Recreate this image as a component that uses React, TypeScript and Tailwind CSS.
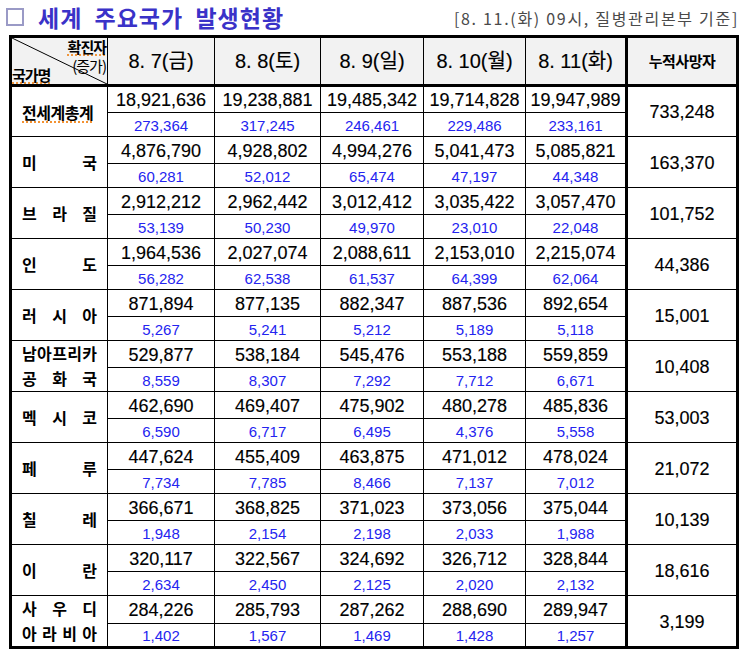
import React from 'react';

interface CountryRow {
  label: string[][];
  total: string[];
  inc: string[];
  death: string;
  underline?: boolean;
}

const dates = [
  { d: '8. 7', w: '금' },
  { d: '8. 8', w: '토' },
  { d: '8. 9', w: '일' },
  { d: '8. 10', w: '월' },
  { d: '8. 11', w: '화' },
];

const rows: CountryRow[] = [
  {
    label: [['전', '세', '계', '총', '계']],
    underline: true,
    total: ['18,921,636', '19,238,881', '19,485,342', '19,714,828', '19,947,989'],
    inc: ['273,364', '317,245', '246,461', '229,486', '233,161'],
    death: '733,248',
  },
  {
    label: [['미', '국']],
    total: ['4,876,790', '4,928,802', '4,994,276', '5,041,473', '5,085,821'],
    inc: ['60,281', '52,012', '65,474', '47,197', '44,348'],
    death: '163,370',
  },
  {
    label: [['브', '라', '질']],
    total: ['2,912,212', '2,962,442', '3,012,412', '3,035,422', '3,057,470'],
    inc: ['53,139', '50,230', '49,970', '23,010', '22,048'],
    death: '101,752',
  },
  {
    label: [['인', '도']],
    total: ['1,964,536', '2,027,074', '2,088,611', '2,153,010', '2,215,074'],
    inc: ['56,282', '62,538', '61,537', '64,399', '62,064'],
    death: '44,386',
  },
  {
    label: [['러', '시', '아']],
    total: ['871,894', '877,135', '882,347', '887,536', '892,654'],
    inc: ['5,267', '5,241', '5,212', '5,189', '5,118'],
    death: '15,001',
  },
  {
    label: [['남', '아', '프', '리', '카'], ['공', '화', '국']],
    total: ['529,877', '538,184', '545,476', '553,188', '559,859'],
    inc: ['8,559', '8,307', '7,292', '7,712', '6,671'],
    death: '10,408',
  },
  {
    label: [['멕', '시', '코']],
    total: ['462,690', '469,407', '475,902', '480,278', '485,836'],
    inc: ['6,590', '6,717', '6,495', '4,376', '5,558'],
    death: '53,003',
  },
  {
    label: [['페', '루']],
    total: ['447,624', '455,409', '463,875', '471,012', '478,024'],
    inc: ['7,734', '7,785', '8,466', '7,137', '7,012'],
    death: '21,072',
  },
  {
    label: [['칠', '레']],
    total: ['366,671', '368,825', '371,023', '373,056', '375,044'],
    inc: ['1,948', '2,154', '2,198', '2,033', '1,988'],
    death: '10,139',
  },
  {
    label: [['이', '란']],
    total: ['320,117', '322,567', '324,692', '326,712', '328,844'],
    inc: ['2,634', '2,450', '2,125', '2,020', '2,132'],
    death: '18,616',
  },
  {
    label: [['사', '우', '디'], ['아', '라', '비', '아']],
    total: ['284,226', '285,793', '287,262', '288,690', '289,947'],
    inc: ['1,402', '1,567', '1,469', '1,428', '1,257'],
    death: '3,199',
  },
];

const font = "font-['Liberation_Sans','Noto_Sans_CJK_KR',sans-serif]";
const korean = "font-['Noto_Sans_CJK_KR','Liberation_Sans',sans-serif]";

function CountryLabel({ row }: { row: CountryRow }) {
  if (row.underline) {
    return (
      <span className="text-[16px] font-bold tracking-[-0.5px] underline decoration-dotted decoration-[#f07800] underline-offset-[3px]">
        전세계총계
      </span>
    );
  }
  return (
    <div className="flex flex-col">
      {row.label.map((line, i) => (
        <div key={i} className="flex justify-between leading-[25px] text-[16px] font-bold">
          {line.map((ch, j) => (
            <span key={j}>{ch}</span>
          ))}
        </div>
      ))}
    </div>
  );
}

export default function App() {
  return (
    <div className={`w-[742px] h-[663px] bg-white ${font} text-black`}>
      {/* title */}
      <div className="flex items-end justify-between pl-[6px] pr-[3px] pt-[4px] h-[35px]">
        <div className="flex items-center gap-[14px] mb-[5px]">
          <span className="w-[18px] h-[18px] border-2 border-[#9a9ac6] bg-white" />
          <span className={`${korean} text-[23px] leading-[26px] font-bold text-[#3a32c8] tracking-[1px] [word-spacing:6px]`}>
            세계 주요국가 발생현황
          </span>
        </div>
        <span className={`${korean} text-[16px] leading-[20px] text-[#4a4a4a] mb-[7px] tracking-[1.7px]`}>
          [8. 11.(화) 09시, 질병관리본부 기준]
        </span>
      </div>

      {/* table */}
      <table className="ml-[9px] w-[727px] table-fixed border-collapse border-[3px] border-black">
        <colgroup>
          <col className="w-[97px]" />
          <col className="w-[107px]" />
          <col className="w-[106px]" />
          <col className="w-[103px]" />
          <col className="w-[102px]" />
          <col className="w-[101px]" />
          <col className="w-[111px]" />
        </colgroup>
        <thead>
          <tr className="h-[49px] bg-[#f2f2f2]">
            <th className="relative border border-black border-b-[3px] border-b-double p-0 font-normal">
              <svg className="absolute inset-0 w-full h-full" preserveAspectRatio="none" viewBox="0 0 100 100">
                <line x1="0" y1="0" x2="100" y2="100" stroke="black" strokeWidth="1" vectorEffect="non-scaling-stroke" />
              </svg>
              <div className={`relative h-[46px] ${korean} text-[15px] leading-[16px]`}>
                <span className="absolute right-[1px] top-[1px] font-bold tracking-[-1px] underline decoration-dotted decoration-[#f07800] underline-offset-[2px]">
                  확진자
                </span>
                <span className="absolute right-[1px] top-[20px] tracking-[-1px]">(증가)</span>
                <span className="absolute left-0 bottom-[1px] font-bold tracking-[-1px] underline decoration-dotted decoration-[#f07800] underline-offset-[2px]">
                  국가명
                </span>
              </div>
            </th>
            {dates.map((d) => (
              <th key={d.d} className="border border-black border-b-[3px] border-b-double text-[20px] font-normal [-webkit-text-stroke:0.15px]">
                {d.d}({d.w})
              </th>
            ))}
            <th className={`border border-black border-b-[3px] border-b-double border-l-[3px] border-l-double ${korean} text-[15px] font-bold tracking-[-0.5px]`}>
              누적사망자
            </th>
          </tr>
        </thead>
        <tbody>
          {rows.map((r, i) => (
            <React.Fragment key={i}>
              <tr className="h-[27px]">
                <td rowSpan={2} className={`border border-black px-[10px] ${korean}`}>
                  <CountryLabel row={r} />
                </td>
                {r.total.map((v, j) => (
                  <td key={j} className="border border-black text-center text-[18px] leading-[20px] text-black pt-[1px] [-webkit-text-stroke:0.15px]">
                    {v}
                  </td>
                ))}
                <td rowSpan={2} className="border border-black border-l-[3px] border-l-double text-center text-[18px] pt-[2px] [-webkit-text-stroke:0.15px]">
                  {r.death}
                </td>
              </tr>
              <tr className="h-[24px]">
                {r.inc.map((v, j) => (
                  <td key={j} className="border border-black text-center text-[15px] leading-[18px] text-[#2424f0] pt-[2px]">
                    {v}
                  </td>
                ))}
              </tr>
            </React.Fragment>
          ))}
        </tbody>
      </table>
    </div>
  );
}
